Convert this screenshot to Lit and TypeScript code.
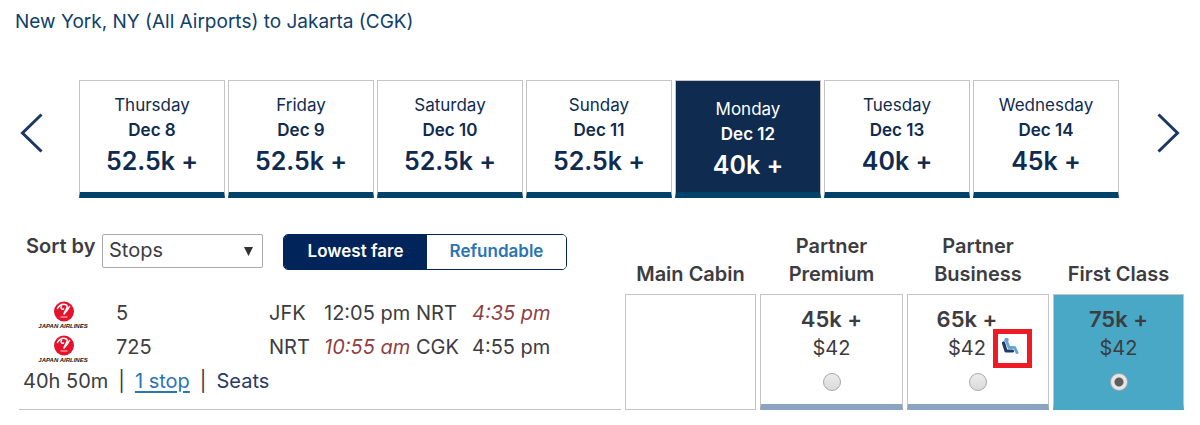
import { LitElement, html, css, nothing } from "lit";
import { customElement, property, state } from "lit/decorators.js";
import { classMap } from "lit/directives/class-map.js";

interface Day {
  name: string;
  date: string;
  price: string;
}

interface Leg {
  flight: string;
  from: string;
  departs: string;
  departsOtherDay?: boolean;
  to: string;
  arrives: string;
  arrivesOtherDay?: boolean;
}

interface Fare {
  cabin: string;
  miles?: string;
  fee?: string;
  seatIcon?: boolean;
}

const DAYS: Day[] = [
  { name: "Thursday", date: "Dec 8", price: "52.5k +" },
  { name: "Friday", date: "Dec 9", price: "52.5k +" },
  { name: "Saturday", date: "Dec 10", price: "52.5k +" },
  { name: "Sunday", date: "Dec 11", price: "52.5k +" },
  { name: "Monday", date: "Dec 12", price: "40k +" },
  { name: "Tuesday", date: "Dec 13", price: "40k +" },
  { name: "Wednesday", date: "Dec 14", price: "45k +" },
];

const LEGS: Leg[] = [
  { flight: "5", from: "JFK", departs: "12:05 pm", to: "NRT", arrives: "4:35 pm", arrivesOtherDay: true },
  { flight: "725", from: "NRT", departs: "10:55 am", departsOtherDay: true, to: "CGK", arrives: "4:55 pm" },
];

const FARES: Fare[] = [
  { cabin: "Main Cabin" },
  { cabin: "Partner Premium", miles: "45k +", fee: "$42" },
  { cabin: "Partner Business", miles: "65k +", fee: "$42", seatIcon: true },
  { cabin: "First Class", miles: "75k +", fee: "$42" },
];

@customElement("day-strip")
class DayStrip extends LitElement {
  @property({ attribute: false }) days: Day[] = [];
  @state() private selected = 4;

  static styles = css`
    :host {
      display: flex;
      align-items: stretch;
    }
    button {
      font: inherit;
      color: inherit;
      cursor: pointer;
    }
    .arrow {
      flex: none;
      width: 79px;
      padding: 0 20px 12px;
      border: 0;
      background: none;
      display: flex;
      align-items: center;
    }
    .arrow.next {
      width: 81px;
      justify-content: flex-end;
    }
    .days {
      flex: 1;
      min-width: 0;
      display: grid;
      grid-auto-flow: column;
      grid-auto-columns: minmax(0, 1fr);
      gap: 3px;
    }
    .day {
      height: 118px;
      padding: 12px 0 0;
      border: 1px solid #c4c4c4;
      border-bottom: 6px solid #00426a;
      background: #fff;
      display: flex;
      flex-direction: column;
      align-items: center;
      justify-content: flex-start;
      color: #0f2b50;
    }
    .day.selected {
      padding-top: 16px;
      background: #0f2b50;
      color: #fff;
    }
    .name,
    .date {
      font-size: 17px;
      line-height: 25px;
    }
    .date {
      font-weight: 600;
    }
    .price {
      font-size: 25px;
      line-height: 36px;
      font-weight: 600;
    }
  `;

  render() {
    return html`
      <button class="arrow" aria-label="Previous days">
        <svg width="23" height="40" viewBox="0 0 23 40" fill="none" stroke="#1b3763" stroke-width="3">
          <path d="M21.500 1.500 2.500 20 21.500 38.500" />
        </svg>
      </button>
      <div class="days">
        ${this.days.map(
          (day, i) => html`
            <button
              class=${classMap({ day: true, selected: i === this.selected })}
              @click=${() => (this.selected = i)}
            >
              <span class="name">${day.name}</span>
              <span class="date">${day.date}</span>
              <span class="price">${day.price}</span>
            </button>
          `
        )}
      </div>
      <button class="arrow next" aria-label="Next days">
        <svg width="23" height="40" viewBox="0 0 23 40" fill="none" stroke="#1b3763" stroke-width="3">
          <path d="M1.500 1.500 20.500 20 1.500 38.500" />
        </svg>
      </button>
    `;
  }
}

@customElement("fare-table")
class FareTable extends LitElement {
  @property({ attribute: false }) legs: Leg[] = [];
  @property({ attribute: false }) fares: Fare[] = [];
  @state() private chosen = 3;
  @state() private refundable = false;

  static styles = css`
    :host {
      display: block;
      color: #3c3c41;
    }
    table {
      width: 100%;
      table-layout: fixed;
      border-collapse: separate;
      border-spacing: 4px 0;
    }
    .narrow {
      width: 131px;
    }
    .wide {
      width: 143px;
    }
    .medium {
      width: 142px;
    }
    th,
    td {
      padding: 0;
      box-sizing: border-box;
    }
    .cabin {
      padding: 0 16px 6px;
      font-size: 20px;
      line-height: 28px;
      font-weight: 600;
      text-align: center;
      vertical-align: bottom;
    }
    .cabin.single {
      padding: 0 0 6px;
    }
    .tools {
      vertical-align: top;
      text-align: left;
      font-weight: 400;
    }
    .bar {
      display: flex;
      align-items: flex-start;
      padding: 2px 0 0 7px;
    }
    .sort-label {
      font-size: 20px;
      line-height: 24px;
      font-weight: 600;
      width: 76px;
      white-space: nowrap;
    }
    .select {
      display: grid;
      align-items: center;
      width: 161px;
      margin-right: 20px;
    }
    .select > * {
      grid-area: 1 / 1;
    }
    select {
      appearance: none;
      height: 34px;
      box-sizing: border-box;
      padding: 0 24px 3px 6px;
      border: 1px solid #a9a9a9;
      border-radius: 2px;
      background: #fff;
      color: inherit;
      font: inherit;
      font-size: 20px;
    }
    .caret {
      justify-self: end;
      margin-right: 10px;
      pointer-events: none;
    }
    .toggle {
      display: flex;
      height: 36px;
      box-sizing: border-box;
      border: 1px solid #01255a;
      border-radius: 5px;
      overflow: hidden;
    }
    .toggle button {
      width: 143px;
      padding: 0 0 3px;
      border: 0;
      background: #fff;
      color: #2a75b3;
      font: inherit;
      font-size: 17px;
      font-weight: 600;
    }
    .toggle button + button {
      width: 139px;
    }
    .toggle button.on {
      background: #01255a;
      color: #fff;
    }
    .itinerary {
      vertical-align: top;
      border-bottom: 1px solid #c4c4c4;
      padding: 2px 0 0 4px;
      font-size: 20px;
      line-height: 34px;
      white-space: nowrap;
    }
    .leg {
      display: grid;
      grid-template-columns: 93px 153px 55px 92px 56px auto;
      align-items: center;
    }
    .leg svg {
      display: block;
      margin-left: 15px;
    }
    .other-day {
      font-style: italic;
      color: #8f3f44;
    }
    .summary {
      display: flex;
      gap: 10px;
    }
    .summary a {
      color: #2a75b3;
      text-underline-offset: 3px;
      text-decoration-thickness: 2px;
    }
    .summary .seats {
      color: #2a3a66;
      text-decoration: none;
    }
    .fare {
      height: 116px;
      vertical-align: top;
      border: 1px solid #c4c4c4;
      text-align: center;
    }
    .fare.offered {
      border-bottom: 6px solid #8ba4c2;
    }
    .fare.chosen {
      background: #48a8c5;
      border-bottom-color: #48a8c5;
    }
    .option {
      display: flex;
      flex-direction: column;
      align-items: center;
      padding-top: 10px;
    }
    .quote {
      display: flex;
      align-items: flex-end;
      gap: 4px;
    }
    .miles,
    .fee {
      display: block;
    }
    .miles {
      font-size: 22px;
      line-height: 28px;
      font-weight: 600;
    }
    .fee {
      font-size: 20px;
      line-height: 30px;
    }
    .seat {
      position: relative;
      display: block;
      width: 18px;
      height: 26px;
    }
    .marker {
      position: absolute;
      left: -8px;
      top: -8px;
      width: 39px;
      height: 39px;
      box-sizing: border-box;
      border: 5px solid #ed1c24;
    }
    input {
      appearance: none;
      box-sizing: border-box;
      width: 18px;
      height: 18px;
      margin: 10px 0 0;
      border: 1px solid #a8a8a8;
      border-radius: 50%;
      background: linear-gradient(#ececec, #dadada);
    }
    input:checked {
      background: radial-gradient(circle, #5e5e5e 4px, #e6e6e6 5px);
    }
  `;

  private logo() {
    return html`
      <svg width="54" height="34" viewBox="0 0 54 34" role="img" aria-label="Japan Airlines">
        <circle cx="26" cy="15.500" r="10" fill="#e4122b" />
        <path
          d="M19.500 12.500c2-3.500 5.500-5 9-3.500 2.500 2-1.500 5-2.500 9M23.500 10c-1 2 0 4 2 3M31.500 10.500c-1.500 3-3 5-5.500 7.500"
          fill="none" stroke="#fff" stroke-width="1.500" stroke-linecap="round"
        />
        <path d="M22.500 21h7" stroke="#f3909a" stroke-width="1.500" />
        <text
          x="25" y="32" text-anchor="middle" font-family="Liberation Sans, sans-serif"
          font-size="6" font-weight="700" font-style="italic" fill="#151515"
        >JAPAN AIRLINES</text>
      </svg>
    `;
  }

  private seat() {
    return html`
      <span class="seat">
        <svg width="19" height="19" viewBox="0 0 19 19" role="img" aria-label="Reclining seat" fill="none">
          <path d="M2.500 6 5 14H11.500" stroke="#1f3a68" stroke-width="3.200" stroke-linecap="round" stroke-linejoin="round" />
          <circle cx="5.500" cy="3" r="2.300" fill="#6aa5d8" />
          <path d="M6 5.500 8 10.500H13.500L16 15.500" stroke="#6aa5d8" stroke-width="3" stroke-linecap="round" stroke-linejoin="round" />
        </svg>
        <span class="marker"></span>
      </span>
    `;
  }

  private fareCell(fare: Fare, i: number) {
    if (!fare.miles) return html`<td class="fare"></td>`;
    return html`
      <td class=${classMap({ fare: true, offered: true, chosen: i === this.chosen })}>
        <label class="option">
          <span class="quote">
            <span>
              <span class="miles">${fare.miles}</span>
              <span class="fee">${fare.fee}</span>
            </span>
            ${fare.seatIcon ? this.seat() : nothing}
          </span>
          <input
            type="radio"
            name="fare"
            .checked=${i === this.chosen}
            @change=${() => (this.chosen = i)}
          />
        </label>
      </td>
    `;
  }

  render() {
    return html`
      <table>
        <colgroup>
          <col />
          <col class="narrow" />
          <col class="wide" />
          <col class="medium" />
          <col class="narrow" />
        </colgroup>
        <thead>
          <tr>
            <td class="tools">
              <div class="bar">
                <label class="sort-label" for="sort">Sort by</label>
                <div class="select">
                  <select id="sort">
                    <option>Stops</option>
                    <option>Price</option>
                    <option>Duration</option>
                  </select>
                  <svg class="caret" width="9" height="9" viewBox="0 0 9 9" aria-hidden="true">
                    <path d="M0 0H9L4.500 9Z" fill="#333" />
                  </svg>
                </div>
                <div class="toggle">
                  <button
                    class=${classMap({ on: !this.refundable })}
                    @click=${() => (this.refundable = false)}
                  >Lowest fare</button>
                  <button
                    class=${classMap({ on: this.refundable })}
                    @click=${() => (this.refundable = true)}
                  >Refundable</button>
                </div>
              </div>
            </td>
            ${this.fares.map(
              (fare) => html`
                <th
                  scope="col"
                  class=${classMap({ cabin: true, single: !fare.cabin.startsWith("Partner") })}
                >${fare.cabin}</th>
              `
            )}
          </tr>
        </thead>
        <tbody>
          <tr>
            <td class="itinerary">
              ${this.legs.map(
                (leg) => html`
                  <div class="leg">
                    ${this.logo()}
                    <span>${leg.flight}</span>
                    <span>${leg.from}</span>
                    <span class=${classMap({ "other-day": !!leg.departsOtherDay })}>${leg.departs}</span>
                    <span>${leg.to}</span>
                    <span class=${classMap({ "other-day": !!leg.arrivesOtherDay })}>${leg.arrives}</span>
                  </div>
                `
              )}
              <div class="summary">
                <span>40h 50m</span>
                <span>|</span>
                <a href="#stops">1 stop</a>
                <span>|</span>
                <a class="seats" href="#seats">Seats</a>
              </div>
            </td>
            ${this.fares.map((fare, i) => this.fareCell(fare, i))}
          </tr>
        </tbody>
      </table>
    `;
  }
}

@customElement("app-root")
class AppRoot extends LitElement {
  static styles = css`
    :host {
      display: block;
      background: #fff;
      font-family: Inter, "Liberation Sans", sans-serif;
    }
    .route {
      margin: 0;
      padding: 10px 15px 46px;
      color: #0f4068;
      font-size: 19px;
      line-height: 24px;
      font-weight: 400;
    }
    .results {
      padding: 34px 12px 15px 15px;
    }
  `;

  render() {
    return html`
      <h1 class="route">New York, NY (All Airports) to Jakarta (CGK)</h1>
      <day-strip .days=${DAYS}></day-strip>
      <div class="results">
        <fare-table .legs=${LEGS} .fares=${FARES}></fare-table>
      </div>
    `;
  }
}
